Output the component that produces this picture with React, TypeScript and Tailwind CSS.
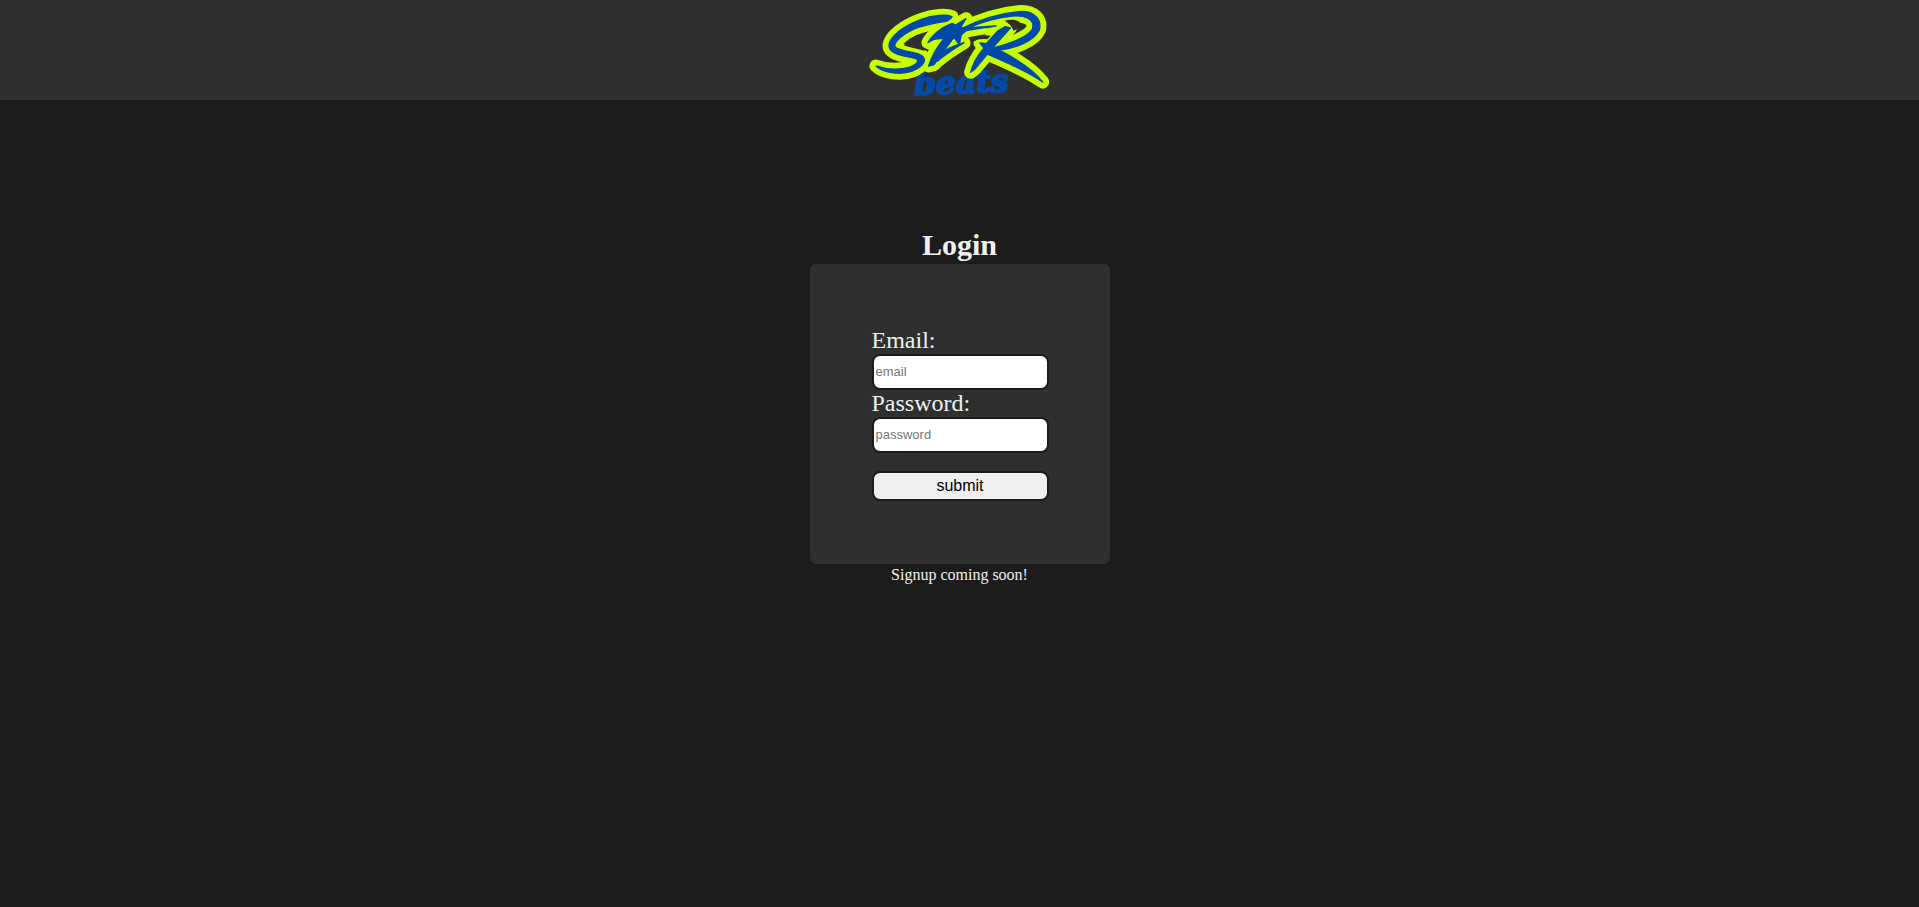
const strokes = [
  "M276 50 C258 42 218 46 184 58 C134 76 90 108 87 136 C86 157 112 165 140 170 C166 174 182 178 168 191 C146 208 92 214 48 198 C70 220 125 226 158 213 C188 200 202 182 187 168 C172 156 128 156 106 142 C98 130 125 104 160 88 C195 74 230 68 258 64 C268 60 273 56 276 50 Z",
  "M204 128 C214 108 240 84 276 70 L284 74 L270 86 L318 56 L302 82 L328 84 L304 104 L298 134 L282 112 L252 152 L222 194 L206 198 C214 172 232 140 252 116 C234 114 216 118 204 128 Z",
  "M240 160 C262 146 284 136 312 128 C284 146 260 160 232 184 Z",
  "M300 88 C352 62 420 40 474 35 C524 30 546 60 538 90 C522 124 468 144 412 152 L386 147 C440 134 498 114 516 90 C528 62 502 46 458 48 C410 53 356 70 326 83 L408 78 C372 84 330 88 306 96 Z",
  "M436 80 L451 84 L396 146 L346 206 L332 217 C338 192 352 168 372 144 L360 129 L379 131 L412 94 Z",
  "M392 140 C432 155 512 198 548 246 C500 212 432 184 386 164 Z",
];

function Logo() {
  return (
    <svg viewBox="0 0 600 300" role="img" aria-label="STR beats" className="h-[100px] w-[200px]">
      <text
        x="164"
        y="284"
        fontFamily="'DejaVu Serif', serif"
        fontSize="94"
        fontWeight="bold"
        fontStyle="italic"
        fill="#0349a8"
        stroke="#0349a8"
        strokeWidth="6"
        transform="rotate(-2 163 282)"
      >
        beats
      </text>
      <g fill="#c8ff00" stroke="#c8ff00" strokeWidth="39" strokeLinejoin="round">
        {strokes.map((d) => (
          <path key={d} d={d} />
        ))}
      </g>
      <g fill="#2f2f2f">
        <path d="M130 136 C145 124 162 118 178 116 C172 130 180 142 198 146 L192 152 C170 146 150 142 130 136 Z" />
        <path d="M338 116 C352 105 372 104 392 107 L382 118 C364 116 352 118 344 124 Z" />
        <path d="M434 62 C454 57 478 60 482 70 C480 82 472 88 460 92 C456 78 446 70 434 62 Z" />
      </g>
      <g fill="#0349a8" stroke="#0349a8" strokeWidth="4" strokeLinejoin="round">
        {strokes.map((d) => (
          <path key={d} d={d} />
        ))}
      </g>
    </svg>
  );
}

const control = "w-full rounded-lg border-2 border-[#1c1c1c] font-['Liberation_Sans',sans-serif]";

function Field({ id, label, type }: { id: string; label: string; type: string }) {
  return (
    <>
      <label htmlFor={id} className="block text-2xl leading-[27px]">
        {label}
      </label>
      <input
        id={id}
        name={id}
        type={type}
        placeholder={id}
        className={`${control} block h-9 bg-white px-0.5 pb-0.5 text-[13px] text-black placeholder:text-[#757575]`}
      />
    </>
  );
}

export default function App() {
  return (
    <div className="min-h-screen bg-[#1c1c1c] font-['Liberation_Serif',serif] text-[#f0f0f0]">
      <header className="flex justify-center bg-[#2f2f2f]">
        <Logo />
      </header>
      <main className="flex flex-col items-center pt-32">
        <h1 className="pb-0.5 text-[30px] leading-[34px] font-bold">Login</h1>
        <form
          className="w-[300px] rounded-md bg-[#2f2f2f] py-[63px] pr-[61px] pl-[62px]"
          onSubmit={(event) => event.preventDefault()}
        >
          <Field id="email" label="Email:" type="email" />
          <Field id="password" label="Password:" type="password" />
          <button
            type="submit"
            className={`${control} mt-[18px] block h-[30px] bg-[#efefef] text-base leading-6 text-black`}
          >
            submit
          </button>
        </form>
        <p className="text-base leading-[22px]">Signup coming soon!</p>
      </main>
    </div>
  );
}
